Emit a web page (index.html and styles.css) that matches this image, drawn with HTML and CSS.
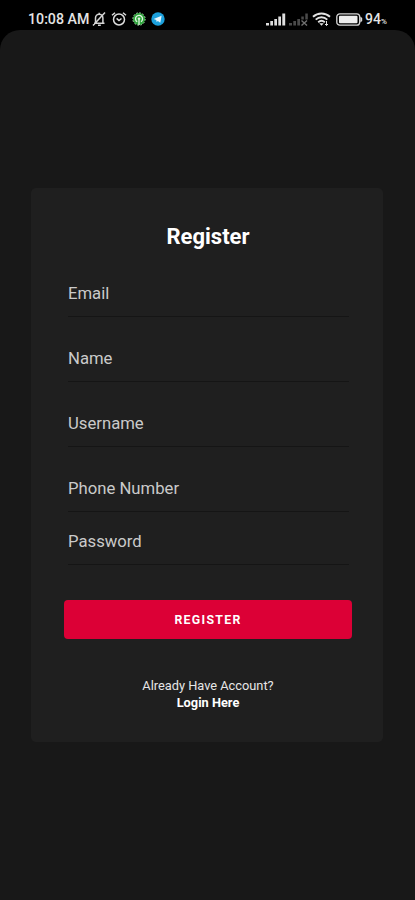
FILE: index.html
```html
<!DOCTYPE html>
<html lang="en">
<head>
    <meta charset="UTF-8">
    <meta name="viewport" content="width=device-width, initial-scale=1.0">
    <title>Register</title>
    <link rel="stylesheet" href="styles.css">
</head>
<body>
    <div class="status-bar">
        <div class="status-left">
            <span class="time">10:08 AM</span>
            <svg class="icon-bell" width="14" height="16" viewBox="0 0 14 16" fill="none" stroke="#d4d4d4" stroke-width="1.5">
                <path d="M2 12.2h10.5M3.5 12V7a3.7 3.7 0 0 1 7.4 0v5M6 14.2h2.800M7.200 3.200V1.800M1 14.500L13 1.500"/>
            </svg>
            <svg class="icon-alarm" width="16" height="16" viewBox="0 0 16 16" fill="none" stroke="#dcdcdc" stroke-width="1.5">
                <circle cx="8" cy="8.5" r="5.5"/>
                <path d="M5.6 7.4L8 9.5l2.5-2M1 4.3l3-2.6M15 4.3l-3-2.6"/>
            </svg>
            <svg class="icon-green" width="14" height="14" viewBox="0 0 14 14" fill="none">
                <circle cx="7" cy="7" r="6" fill="#2fa63c"/>
                <circle cx="7" cy="7" r="6.2" stroke="#a5dba8" stroke-width="1" stroke-dasharray="1.6 1.6"/>
                <path d="M5.2 9.8A3.5 3.5 0 1 1 9 9.7M7 13V7" stroke="#e2f5e2" stroke-width="1.3"/>
                <circle cx="7" cy="6.6" r="1.2" fill="#e2f5e2"/>
            </svg>
            <svg class="icon-telegram" width="14" height="14" viewBox="0 0 14 14">
                <circle cx="7" cy="7" r="6.7" fill="#1ca0dc"/>
                <path d="M2.6 6.9l8-3.2-1.3 7-2.4-1.8-1.3 1.2-.3-2.2z" fill="#e8f6fd"/>
            </svg>
        </div>
        <div class="status-right">
            <svg class="icon-signal" width="20" height="13" viewBox="0 0 20 13" fill="#dedede">
                <path d="M0 10h3v2.5h-3zM4.300 8h2.700v4.500h-2.700zM8.300 6h2.700v6.500h-2.700zM12.300 3.500h2.700v9h-2.700zM16.300.500h2.900v12h-2.900z"/>
            </svg>
            <svg class="icon-signal-off" width="20" height="13" viewBox="0 0 20 13" fill="#4a4a4a">
                <path d="M0 10h3v2.5h-3zM4.300 8h2.700v4.500h-2.700zM8.300 6h2.700v6.500h-2.700zM12.300 3.500h2.500v3h-2.500zM16.300.500h2.500v6h-2.500z"/>
                <path d="M12.500 7.500l5.500 5M18 7.500l-5.500 5" stroke="#707070" stroke-width="1.4"/>
            </svg>
            <svg class="icon-wifi" width="19" height="14" viewBox="0 0 19 14" fill="none" stroke="#e2e2e2" stroke-width="1.9">
                <path d="M1 4.800C5.800.300 13.200.300 18 4.800M3.700 7.600c3.400-3.100 8.200-3.100 11.600 0M6.200 10.200c2-1.700 4.600-1.700 6.600 0"/>
                <path d="M7.300 11.200h4.400L9.500 13.800z" fill="#e2e2e2" stroke="none"/>
                <path d="M14.500 9v4.500M13 12l1.500 1.500L16 12" stroke-width="1"/>
            </svg>
            <svg class="icon-battery" width="27" height="13" viewBox="0 0 27 13">
                <rect x=".8" y=".8" width="22.9" height="11.4" rx="3" fill="none" stroke="#d5d5d5" stroke-width="1.3"/>
                <rect x="3" y="2.8" width="18.5" height="7.4" rx="1" fill="#ededed"/>
                <path d="M24.300 3.500l1.900 1.500v3l-1.900 1.500z" fill="#d5d5d5"/>
            </svg>
            <span class="battery-text">94<small>%</small></span>
        </div>
    </div>

    <div class="screen">
        <form class="card">
            <h1>Register</h1>
            <input type="email" class="field" placeholder="Email">
            <input type="text" class="field" placeholder="Name">
            <input type="text" class="field" placeholder="Username">
            <input type="tel" class="field field-phone" placeholder="Phone Number">
            <input type="password" class="field field-password" placeholder="Password">
            <button type="button" class="btn-register">REGISTER</button>
            <p class="login">Already Have Account?<a href="#login">Login Here</a></p>
        </form>
    </div>
</body>
</html>
```
FILE: styles.css
```css
* {
    box-sizing: border-box;
}

body {
    margin: 0;
    height: 900px;
    display: flex;
    flex-direction: column;
    background-color: #000;
    font-family: Roboto, sans-serif;
    color: #fff;
    overflow: hidden;
}

.status-bar {
    height: 30px;
    padding: 9px 27px 0 28px;
    display: flex;
    justify-content: space-between;
    color: #e4e4e4;
}

.status-left,
.status-right {
    height: 20px;
    display: flex;
    align-items: center;
}

.time {
    width: 62px;
    font-size: 14.2px;
    font-weight: 500;
    white-space: nowrap;
}

.icon-bell {
    margin-left: 2px;
}

.icon-alarm {
    margin-left: 5px;
}

.icon-green {
    margin-left: 5px;
}

.icon-telegram {
    margin-left: 5px;
}

.icon-signal-off {
    margin-left: 3px;
}

.icon-wifi {
    margin-left: 3px;
}

.icon-battery {
    margin-left: 5px;
}

.battery-text {
    width: 23px;
    margin-left: 2px;
    font-size: 14px;
    font-weight: 500;
    white-space: nowrap;
}

.battery-text small {
    font-size: 8px;
}

.screen {
    flex: 1;
    padding: 158px 32px 0 31px;
    border-radius: 20px 20px 0 0;
    background-color: #181818;
}

.card {
    height: 554px;
    padding: 34px 31px 0 33px;
    display: flex;
    flex-direction: column;
    border-radius: 5px;
    background-color: #1f1f1f;
}

h1 {
    margin: 0 0 22px;
    font-size: 22px;
    line-height: 30px;
    font-weight: 700;
    text-align: center;
}

.field {
    height: 43px;
    margin: 0 3px 22px 4px;
    padding: 0 0 4px;
    border: none;
    border-bottom: 1px solid #151515;
    background: none;
    color: #fff;
    font-family: inherit;
    font-size: 16.7px;
    outline: none;
}

.field::placeholder {
    color: #cacaca;
}

.field-phone {
    margin-bottom: 10px;
}

.field-password {
    margin-bottom: 35px;
}

.btn-register {
    height: 39px;
    border: none;
    border-radius: 4px;
    background-color: #dc0036;
    color: #fff;
    font-family: inherit;
    font-size: 12.3px;
    font-weight: 700;
    letter-spacing: 1.3px;
}

.login {
    margin: 38px 0 0;
    font-size: 12.8px;
    line-height: 17px;
    text-align: center;
    color: #e6e6e6;
}

.login a {
    display: block;
    color: #fff;
    font-weight: 700;
    text-decoration: none;
}
```
